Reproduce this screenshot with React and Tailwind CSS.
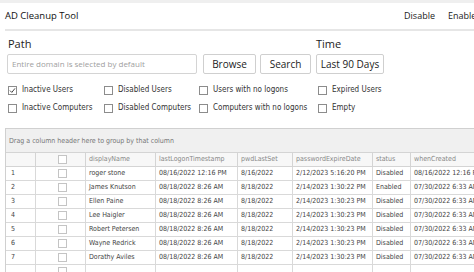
import React from "react";

const rows = [
  ["1", "roger stone", "08/16/2022 12:16 PM", "8/16/2022", "2/12/2023 5:16:20 PM", "Disabled", "08/16/2022 12:16 PM"],
  ["2", "James Knutson", "08/18/2022 8:26 AM", "8/18/2022", "2/14/2023 1:30:22 PM", "Enabled", "07/30/2022 6:33 AM"],
  ["3", "Ellen Paine", "08/18/2022 8:26 AM", "8/18/2022", "2/14/2023 1:30:23 PM", "Disabled", "07/30/2022 6:33 AM"],
  ["4", "Lee Haigler", "08/18/2022 8:26 AM", "8/18/2022", "2/14/2023 1:30:23 PM", "Disabled", "07/30/2022 6:33 AM"],
  ["5", "Robert Petersen", "08/18/2022 8:26 AM", "8/18/2022", "2/14/2023 1:30:23 PM", "Disabled", "07/30/2022 6:33 AM"],
  ["6", "Wayne Redrick", "08/18/2022 8:26 AM", "8/18/2022", "2/14/2023 1:30:23 PM", "Disabled", "07/30/2022 6:33 AM"],
  ["7", "Dorathy Aviles", "08/18/2022 8:26 AM", "8/18/2022", "2/14/2023 1:30:23 PM", "Disabled", "07/30/2022 6:33 AM"],
  ["", "", "", "", "", "", ""],
];

const headers = ["", "", "displayName", "lastLogonTimestamp", "pwdLastSet", "passwordExpireDate", "status", "whenCreated"];

function Box({ checked }) {
  return (
    <span className="w-[9px] h-[9px] border border-[#8c8c8c] bg-white flex items-center justify-center shrink-0">
      {checked && (
        <svg width="7" height="7" viewBox="0 0 7 7">
          <path d="M1 3.6 L2.8 5.4 L6 1.4" fill="none" stroke="#444" strokeWidth="1" />
        </svg>
      )}
    </span>
  );
}

function Check({ label, checked }) {
  return (
    <div className="flex items-center gap-[5px] h-[14px]">
      <Box checked={checked} />
      <span className="text-[8px] text-[#333] leading-none" style={{ fontStretch: "condensed" }}>{label}</span>
    </div>
  );
}

function GridBox() {
  return <span className="w-[9px] h-[9px] border border-[#c4c4c4] bg-white block" />;
}

const btn = "h-[20px] border border-[#cfcfcf] rounded-[2px] bg-white text-[10px] text-[#222] flex items-center justify-center";

export default function App() {
  const cols = "grid grid-cols-[30px_50px_70px_82px_55px_80px_38px_100px]";
  return (
    <div className="w-[474px] h-[272px] overflow-hidden bg-white" style={{ fontFamily: "'Open Sans', 'Noto Sans', sans-serif" }}>
      <div className="h-[3px] bg-[#efefef]" />
      <div className="h-[26px] flex items-center pl-[5px]">
        <span className="text-[9.5px] text-[#111]">AD Cleanup Tool</span>
        <div className="ml-auto flex items-center gap-[13px] text-[9px] text-[#222]">
          <span>Disable</span>
          <span className="w-[26px] overflow-hidden whitespace-nowrap">Enable</span>
        </div>
      </div>
      <div className="ml-[5px] h-[2px] bg-[#e6e6e6]" />
      <div className="pl-[7px]">
        <div className="mt-[6px] h-[14px] flex items-center text-[11px] text-[#222]">
          <span className="w-[309px] pl-[1px]">Path</span>
          <span>Time</span>
        </div>
        <div className="mt-[3px] h-[20px] flex">
          <div className="w-[190px] h-[20px] border border-[#d4d4d4] rounded-[2px] flex items-center pl-[4px] text-[8px] text-[#a0a0a0]">
            Entire domain is selected by default
          </div>
          <div className={`${btn} ml-[6px] w-[53px]`}>Browse</div>
          <div className={`${btn} ml-[4px] w-[51px]`}>Search</div>
          <div className={`${btn} ml-[5px] w-[68px]`}>Last 90 Days</div>
        </div>
        <div style={{ fontFamily: "'DejaVu Sans', sans-serif" }}>
          <div className="mt-[9px] grid grid-cols-[96px_95px_119px_120px] pl-[1px]">
            <Check label="Inactive Users" checked />
            <Check label="Disabled Users" />
            <Check label="Users with no logons" />
            <Check label="Expired Users" />
          </div>
          <div className="mt-[4px] grid grid-cols-[96px_95px_119px_120px] pl-[1px]">
            <Check label="Inactive Computers" />
            <Check label="Disabled Computers" />
            <Check label="Computers with no logons" />
            <Check label="Empty" />
          </div>
        </div>
      </div>
      <div
        className="mt-[13px] ml-[5px] border-t border-l border-[#d0d0d0] w-[520px]"
        style={{ fontFamily: "'DejaVu Sans', sans-serif", fontStretch: "condensed" }}
      >
        <div className="h-[23px] bg-[#f0f0f0] flex items-center pl-[3px] pt-[2px] text-[7px] text-[#777]">
          Drag a column header here to group by that column
        </div>
        <div className={`${cols} border-t border-[#d4d4d4] bg-[#f7f7f7]`}>
          {headers.map((h, i) => (
            <div key={i} className="h-[14px] border-r border-b border-[#d4d4d4] flex items-center pl-[3px] text-[7px] text-[#888] whitespace-nowrap overflow-hidden">
              {i === 1 ? <div className="w-full flex justify-center"><GridBox /></div> : h}
            </div>
          ))}
        </div>
        {rows.map((r, ri) => (
          <div key={ri} className={`${cols} bg-white`}>
            {[r[0], "", r[1], r[2], r[3], r[4], r[5], r[6]].map((c, i) => (
              <div key={i} className={`h-[14px] border-r border-b border-[#d9d9d9] flex items-center ${i === 0 ? "pl-[5px]" : "pl-[3px]"} text-[7px] text-[#444] whitespace-nowrap overflow-hidden`}>
                {i === 1 ? <div className="w-full flex justify-center"><GridBox /></div> : c}
              </div>
            ))}
          </div>
        ))}
      </div>
    </div>
  );
}
